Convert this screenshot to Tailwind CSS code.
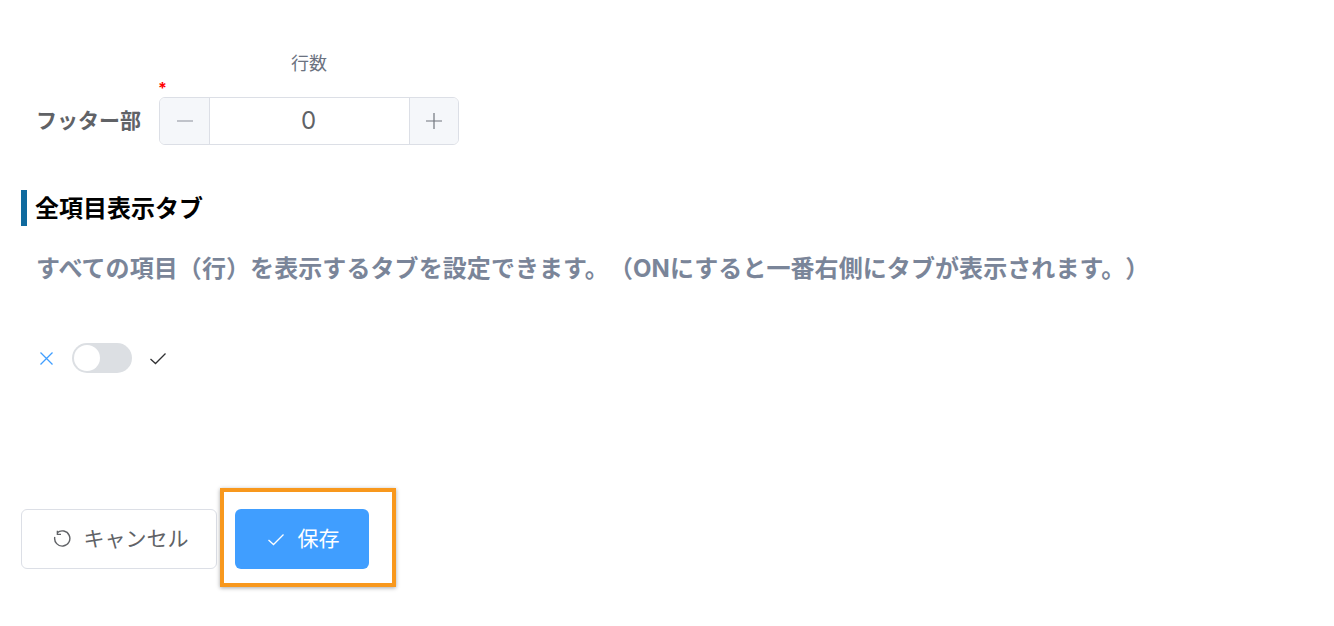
<!DOCTYPE html>
<html lang="ja">
<head>
  <meta charset="UTF-8">
  <title>フッター部</title>
  <script src="https://cdn.jsdelivr.net/npm/@tailwindcss/browser@4"></script>
</head>
<body class="bg-white h-[626px] overflow-hidden font-['Inter','Noto_Sans_CJK_JP',sans-serif] [text-spacing-trim:space-all]">
  <div class="pl-[21px] pt-[51px]">
    <!-- Footer rows -->
    <div class="pl-[138px] w-[438px] text-center text-[18px] leading-[26px] text-[#6b7280]">行数</div>
    <div class="flex items-center mt-[20px] relative">
      <label class="w-[138px] pl-[15px] text-[21px] leading-[48px] font-bold text-[#606266] whitespace-nowrap">フッター部</label>
      <span class="absolute left-[137px] top-[-17px] text-[#f00] text-[16px] leading-[16px] font-bold">*</span>
      <div class="flex w-[300px] h-[48px] rounded-md border border-[#dcdfe6] overflow-hidden">
        <div class="w-[50px] bg-[#f5f7fa] border-r border-[#dcdfe6] flex items-center justify-center">
          <svg class="w-[18px] h-[18px]" viewBox="0 0 18 18" fill="none" stroke="#8b9099" stroke-width="1.2"><path d="M1 9h16"/></svg>
        </div>
        <div class="flex-1 pr-[2px] text-center text-[24px] leading-[46px] text-[#606266]">0</div>
        <div class="w-[49px] bg-[#f5f7fa] border-l border-[#dcdfe6] flex items-center justify-center">
          <svg class="w-[18px] h-[18px]" viewBox="0 0 18 18" fill="none" stroke="#70757d" stroke-width="1.2"><path d="M1 9h16M9 1v16"/></svg>
        </div>
      </div>
    </div>

    <!-- Section -->
    <h2 class="mt-[45px] border-l-[6px] border-[#0f6a9e] pl-2 text-[24px] leading-[36px] font-bold text-black"><span class="relative top-px">全項目表示タブ</span></h2>
    <p class="mt-[25px] pl-[15px] text-[24px] leading-[36px] tracking-[0.08px] font-bold text-[#7a8599] whitespace-nowrap">すべての項目（行）を表示するタブを設定できます。（ONにすると一番右側にタブが表示されます。）</p>

    <!-- Toggle -->
    <div class="flex items-center mt-[56px] h-[30px] pl-[18px]">
      <svg class="w-[15px] h-[15px]" viewBox="0 0 15 15" fill="none" stroke="#409eff" stroke-width="1.3"><path d="M1.5 1.5l12 12M13.5 1.5l-12 12"/></svg>
      <div class="ml-[18px] w-[60px] h-[30px] rounded-full bg-[#dcdfe3] p-0.5">
        <div class="w-[26px] h-[26px] rounded-full bg-white"></div>
      </div>
      <svg class="ml-[17px] w-[18px] h-[15px]" viewBox="0 0 18 15" fill="none" stroke="#303133" stroke-width="1.3"><path d="M1.5 8l5 4.5L16.5 2.5"/></svg>
    </div>

    <!-- Buttons -->
    <div class="flex mt-[136px] relative">
      <button class="flex items-center justify-center gap-[13px] pl-[3px] w-[196px] h-[60px] rounded-md border border-[#dcdfe6] bg-white text-[21px] text-[#606266]">
        <svg class="w-[18px] h-[18px]" viewBox="0 0 18 18" fill="none" stroke="#606266" stroke-width="1.4"><path d="M4.2 2.8A7.6 7.6 0 1 1 1.8 7"/><path d="M4.4 0.8v3.6H8"/></svg>
        キャンセル
      </button>
      <button class="ml-[18px] flex items-center justify-center gap-[13px] pl-[2px] w-[134px] h-[60px] rounded-md bg-[#409eff] text-[21px] text-white">
        <svg class="w-[18px] h-[15px]" viewBox="0 0 18 15" fill="none" stroke="#fff" stroke-width="1.3"><path d="M1.5 8l5 4.5L16.5 2.5"/></svg>
        保存
      </button>
      <!-- highlight -->
      <div class="absolute left-[199px] top-[-21px] w-[176px] h-[99px] border-4 border-[#f8981d] shadow-[0_1px_4px_rgba(0,0,0,0.35)]"></div>
    </div>
  </div>
</body>
</html>
